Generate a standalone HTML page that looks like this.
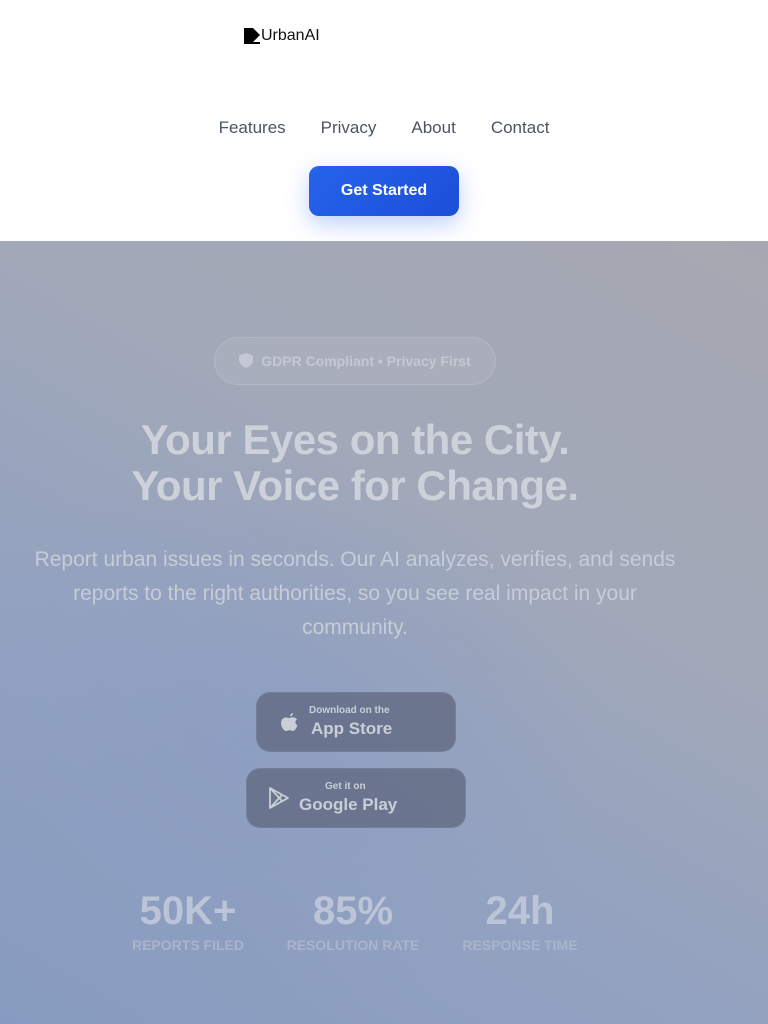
<!DOCTYPE html>
<html><head><meta charset="utf-8">
<style>
*{margin:0;padding:0;box-sizing:border-box}
html,body{width:768px;height:1024px;overflow:hidden;font-family:"Liberation Sans",sans-serif}
.top{position:absolute;left:0;top:0;width:768px;height:241px;background:#fff}
.logo{position:absolute;left:244px;top:27px;font-size:16px;color:#111;display:flex;align-items:center}
.nav{position:absolute;top:118px;left:0;width:768px;text-align:center;font-size:17px;color:#4b5563}
.nav span{margin:0 17.5px}
.btn{position:absolute;left:309px;top:166px;width:150px;height:50px;border-radius:10px;background:linear-gradient(135deg,#2563eb,#1d4ed8);color:#fff;font-weight:bold;font-size:16px;text-align:center;line-height:50px;box-shadow:0 8px 24px rgba(37,99,235,.3)}
.hero{position:absolute;left:0;top:241px;width:768px;height:783px;overflow:hidden;
background:linear-gradient(30deg,#879bc0 0%,#93a2c0 35%,#a2a8b8 65%,#a6a8b1 100%)}
.glow{position:absolute;left:-100px;top:220px;width:700px;height:560px;background:radial-gradient(ellipse at center,rgba(135,155,195,.5),rgba(135,155,195,0) 70%)}
.c{position:absolute;left:0;width:710px;text-align:center}
.badge{position:absolute;left:214px;top:96px;width:282px;height:48px;border-radius:24px;background:rgba(255,255,255,.08);border:1px solid rgba(255,255,255,.12);color:#c3c8d2;font-weight:bold;font-size:14px;line-height:46px;text-align:center}
h1{font-size:42px;line-height:46px;font-weight:bold;color:#cdd1da;letter-spacing:-0.5px}
p{font-size:21px;line-height:34px;color:#c6ccd8}
.sb{position:absolute;border-radius:14px;background:rgba(88,96,118,.68);border:1px solid rgba(255,255,255,.08);color:#c9ced8}
.sb .s{font-size:10px;font-weight:bold;position:absolute}
.sb .b{font-size:17px;font-weight:bold;position:absolute}
.st{position:absolute;top:649px;text-align:center}
.st .n{font-size:40px;font-weight:bold;color:#bcc5d7;line-height:42px}
.st .l{font-size:14px;font-weight:bold;color:#aab4cc;margin-top:5px}
</style></head><body>
<div class="top">
 <div class="logo"><svg width="16" height="16" viewBox="0 0 16 16"><path d="M0 0H9L16 7 9 14H16V16H0Z" fill="#000"/></svg><span style="margin-left:1px">UrbanAI</span></div>
 <div class="nav"><span>Features</span><span>Privacy</span><span>About</span><span>Contact</span></div>
 <div class="btn">Get Started</div>
</div>
<div class="hero">
 <div class="glow"></div>
 <div class="badge"><svg width="14" height="15" viewBox="0 0 14 15" style="vertical-align:-2px;margin-right:8px"><path d="M7 0L14 2.5V7C14 11 10.5 13.5 7 15 3.5 13.5 0 11 0 7V2.5Z" fill="#c3c8d2"/></svg>GDPR Compliant • Privacy First</div>
 <div class="c" style="top:176px"><h1>Your Eyes on the City.<br>Your Voice for Change.</h1></div>
 <div class="c" style="top:302px"><p>Report urban issues in seconds. Our AI analyzes, verifies, and sends<br>reports to the right authorities, so you see real impact in your<br>community.</p></div>
 <div class="sb" style="left:256px;top:451px;width:200px;height:60px">
  <svg style="position:absolute;left:24px;top:20px" width="17" height="20" viewBox="0 0 17 20"><path d="M12 0C12 2 10.5 3.5 9 3.5 9 1.5 10.5 0 12 0ZM8.5 5C9.5 5 10.5 4.3 12 4.3 13.5 4.3 15 5 16 6.5 13.7 7.8 14 11.3 16.5 12.3 15.7 14.5 14 18 12 18 10.5 18 10.3 17.2 8.5 17.2 6.7 17.2 6.3 18 5 18 3 18 0 14 0 10.5 0 6.5 2.5 4.5 5 4.5 6.5 4.5 7.5 5 8.5 5Z" fill="#c9ced8"/></svg>
  <div class="s" style="left:52px;top:12px">Download on the</div>
  <div class="b" style="left:54px;top:26px">App Store</div>
 </div>
 <div class="sb" style="left:246px;top:527px;width:220px;height:60px">
  <svg style="position:absolute;left:22px;top:18px" width="20" height="22" viewBox="0 0 20 22"><path d="M1 1L19 11 1 21Z M1 1L13 14 M1 21L13 8" fill="none" stroke="#c9ced8" stroke-width="1.8" stroke-linejoin="round"/></svg>
  <div class="s" style="left:78px;top:12px">Get it on</div>
  <div class="b" style="left:52px;top:26px">Google Play</div>
 </div>
 <div class="st" style="left:117px;width:142px"><div class="n">50K+</div><div class="l">REPORTS FILED</div></div>
 <div class="st" style="left:278px;width:150px"><div class="n">85%</div><div class="l">RESOLUTION RATE</div></div>
 <div class="st" style="left:450px;width:140px"><div class="n">24h</div><div class="l">RESPONSE TIME</div></div>
</div>
</body></html>
